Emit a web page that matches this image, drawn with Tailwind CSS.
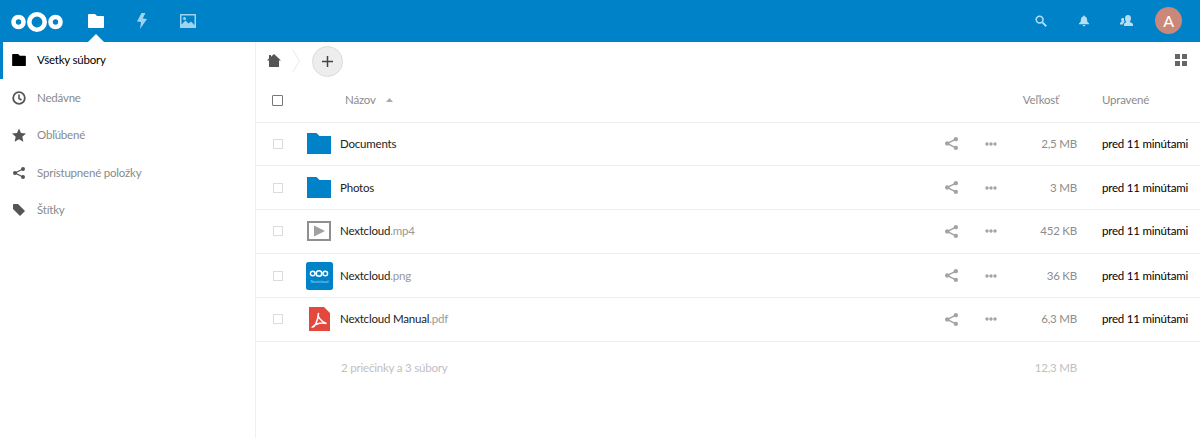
<!DOCTYPE html>
<html><head><meta charset="utf-8"><script src="https://cdn.jsdelivr.net/npm/@tailwindcss/browser@4"></script></head>
<body class="bg-white font-['Lato',sans-serif] text-[11.5px] tracking-[-0.2px] overflow-hidden">
<div class="w-[1200px] h-[438px] flex flex-col overflow-hidden">
<header class="h-[42px] bg-[#0082c9] flex items-center relative shrink-0">
  <svg class="ml-[11px] w-[52px] h-[26px] mt-[2px]" viewBox="0 0 52 26"><g fill="none" stroke="#fff"><circle cx="26" cy="13" r="7.700" stroke-width="4.600"/><circle cx="7.500" cy="13" r="5" stroke-width="4.600"/><circle cx="44.500" cy="13" r="5" stroke-width="4.600"/></g></svg>
  <svg class="ml-[25px] w-[16px] h-[14px] -mt-[1px]" viewBox="0 0 16 14"><path fill="#fff" d="M1 0h6l2 2h6a1 1 0 0 1 1 1v10a1 1 0 0 1-1 1H1a1 1 0 0 1-1-1V1a1 1 0 0 1 1-1z"/></svg>
  <svg class="ml-[33px] w-[10px] h-[16px] -mt-[1px]" viewBox="0 0 10 16"><path fill="#9fd3ee" d="M4.500 0 0 8.500l4 .5L3 16l7-10-4.300-.5L8.500 0z"/></svg>
  <svg class="ml-[33px] w-[16px] h-[14px] -mt-[1px]" viewBox="0 0 16 14"><path fill="#9fd3ee" fill-rule="evenodd" d="M0 0h16v14H0zM1.500 1.500v9l4-4 3 3 2.500-2 3.500 3.500v-9.500zM3 4.500a1.500 1.500 0 1 0 3 0a1.500 1.500 0 1 0-3 0z"/></svg>
  <div class="absolute left-[88px] top-[34px] w-0 h-0 border-x-[8px] border-x-transparent border-b-[8px] border-b-white"></div>
  <div class="ml-auto flex items-center -mt-[1px]">
    <svg class="w-[12px] h-[12px]" viewBox="0 0 13 13"><circle cx="5" cy="5" r="3.700" fill="none" stroke="#b5def3" stroke-width="1.700"/><path d="m8 8 4.200 4.200" stroke="#b5def3" stroke-width="2"/></svg>
    <svg class="ml-[32px] w-[10px] h-[12px]" viewBox="0 0 11 12"><path fill="#b5def3" d="M5.500 0a1 1 0 0 1 1 1C8.500 1.500 9 3.500 9 5.500c0 1.500.8 2.500 2 3v1H0v-1c1.200-.5 2-1.500 2-3C2 3.500 2.500 1.500 4.500 1a1 1 0 0 1 1-1zM4 10.300h3a1.500 1.500 0 0 1-3 0z"/></svg>
    <svg class="ml-[31px] w-[13px] h-[12px]" viewBox="0 0 13 12"><path fill="#b5def3" d="M8 0c2 0 3 1.500 3 3.200S10.300 6 9.800 7c1.200.5 3.200 1 3.200 2.500V11H4V9.500C4 8 5.700 7.500 6.200 7 5.700 6 5 5 5 3.200S6 0 8 0zM3 3c.4 0 .8 0 1 .2C3.800 5 4.300 6 4.700 7 3.500 7.800 3 8.500 3 9.500H0V8.300C0 7.300 1.300 7 1.900 6.500 1.500 5.800 1 5.200 1 4.500 1 3.500 2 3 3 3z"/></svg>
    <div class="ml-[22px] mr-[18px] w-[27px] h-[27px] rounded-full bg-[#c98879] text-white text-[16px] flex items-center justify-center">A</div>
  </div>
</header>
<div class="flex flex-1 min-h-0">
  <nav class="w-[256px] shrink-0 border-r border-[#f0f0f0] text-[#8a8a8a]">
    <div class="h-[37px] pb-[1px] flex items-center border-l-[3px] border-[#0082c9] text-black"><svg class="ml-[9px] w-[14px] h-[12px]" viewBox="0 0 16 14"><path fill="#000" d="M1 0h6l2 2h6a1 1 0 0 1 1 1v10a1 1 0 0 1-1 1H1a1 1 0 0 1-1-1V1a1 1 0 0 1 1-1z"/></svg><span class="ml-[11px]">Všetky súbory</span></div>
    <div class="h-[38px] flex items-center"><svg class="ml-[12px] w-[14px] h-[14px]" viewBox="0 0 14 14"><circle cx="7" cy="7" r="5.800" fill="none" stroke="#555" stroke-width="1.800"/><path d="M7 3.500V7.500l2.500 1.500" fill="none" stroke="#555" stroke-width="1.600"/></svg><span class="ml-[11px]">Nedávne</span></div>
    <div class="h-[37px] pb-[1px] flex items-center"><svg class="ml-[12px] w-[14px] h-[14px]" viewBox="0 0 14 14"><path fill="#555" d="m7 .5 2 4.500 5 .5-3.700 3.300 1.100 5L7 11.200 2.600 13.800l1.100-5L0 5.500 5 5z"/></svg><span class="ml-[11px]">Obľúbené</span></div>
    <div class="h-[38px] flex items-center"><svg class="ml-[13px] w-[12px] h-[12px]" viewBox="0 0 12 12"><g fill="#555"><circle cx="2" cy="6" r="2"/><circle cx="10" cy="2" r="2"/><circle cx="10" cy="10" r="2"/></g><path d="M10 2 2 6l8 4" fill="none" stroke="#555" stroke-width="1.300"/></svg><span class="ml-[12px]">Sprístupnené položky</span></div>
    <div class="h-[37px] pb-[1px] flex items-center"><svg class="ml-[13px] w-[12px] h-[12px]" viewBox="0 0 12 12"><path fill="#555" d="M0 1a1 1 0 0 1 1-1h4l7 7-5 5-7-7z"/></svg><span class="ml-[12px]">Štítky</span></div>
  </nav>
  <main class="flex-1 min-w-0">
    <div class="h-[38px] flex items-center relative">
      <svg class="ml-[11px] w-[14px] h-[13px] -mt-[2px]" viewBox="0 0 14 13"><path fill="#555" d="M7 0l7 6.500h-2V13H2V6.500H0L2 4.600V1h2v1.700z"/></svg>
      <svg class="ml-[11px] w-[8px] h-[24px]" viewBox="0 0 8 24"><path d="M.5.500l7 11.500-7 11.500" fill="none" stroke="#e8e8e8"/></svg>
      <div class="ml-[12px] w-[31px] h-[31px] rounded-full bg-[#ededed] border border-[#dbdbdb] flex items-center justify-center"><svg class="w-[11px] h-[11px]" viewBox="0 0 11 11"><path d="M5.500 0v11M0 5.500h11" stroke="#444" stroke-width="1.500"/></svg></div>
      <svg class="ml-auto mr-[13px] w-[12px] h-[12px] -mt-[2px]" viewBox="0 0 12 12"><path fill="#666" d="M0 0h5v5H0zM7 0h5v5H7zM0 7h5v5H0zM7 7h5v5H7z"/></svg>
    </div>
    <div class="h-[43px] pb-[2px] flex items-center border-b border-[#ededed] text-[#8c8c8c]">
      <div class="ml-[16px] w-[11px] h-[11px] border border-[#767676] rounded-[1px]"></div>
      <span class="ml-[62px] w-[30px]">Názov</span><svg class="ml-[11px] w-[7px] h-[4px]" viewBox="0 0 7 4"><path fill="#aaa" d="M3.500 0 7 4H0z"/></svg>
      <span class="ml-auto mr-[43px]">Veľkosť</span><span class="w-[98px]">Upravené</span>
    </div>
    <div class="h-[43px] pb-[1px] flex items-center border-b border-[#ededed]">
      <div class="ml-[17px] w-[10px] h-[10px] border border-[#dcdcdc]"></div>
      <div class="ml-[24px] w-[24px] flex justify-center"><svg class="w-[24px] h-[21px] shrink-0" viewBox="0 0 24 21"><path fill="#0082c9" d="M0 0h9.500l3 3H24v18H0z"/></svg></div>
      <span class="ml-[9px] text-[#222]">Documents</span>
      <svg class="ml-auto w-[13px] h-[13px]" viewBox="0 0 12 12"><g fill="#a3a3a3"><circle cx="2" cy="6" r="2"/><circle cx="10" cy="2" r="2"/><circle cx="10" cy="10" r="2"/></g><path d="M10 2 2 6l8 4" fill="none" stroke="#a3a3a3" stroke-width="1.300"/></svg>
      <svg class="ml-[27px] w-[12px] h-[4px]" viewBox="0 0 12 4"><g fill="#a3a3a3"><circle cx="2" cy="2" r="1.700"/><circle cx="6" cy="2" r="1.700"/><circle cx="10" cy="2" r="1.700"/></g></svg>
      <span class="w-[80px] text-right text-[#8c8c8c]">2,5 MB</span><span class="ml-[25px] w-[98px] text-black whitespace-nowrap">pred 11 minútami</span>
    </div>
    <div class="h-[44px] flex items-center border-b border-[#ededed]">
      <div class="ml-[17px] w-[10px] h-[10px] border border-[#dcdcdc]"></div>
      <div class="ml-[24px] w-[24px] flex justify-center"><svg class="w-[24px] h-[21px] shrink-0" viewBox="0 0 24 21"><path fill="#0082c9" d="M0 0h9.500l3 3H24v18H0z"/></svg></div>
      <span class="ml-[9px] text-[#222]">Photos</span>
      <svg class="ml-auto w-[13px] h-[13px]" viewBox="0 0 12 12"><g fill="#a3a3a3"><circle cx="2" cy="6" r="2"/><circle cx="10" cy="2" r="2"/><circle cx="10" cy="10" r="2"/></g><path d="M10 2 2 6l8 4" fill="none" stroke="#a3a3a3" stroke-width="1.300"/></svg>
      <svg class="ml-[27px] w-[12px] h-[4px]" viewBox="0 0 12 4"><g fill="#a3a3a3"><circle cx="2" cy="2" r="1.700"/><circle cx="6" cy="2" r="1.700"/><circle cx="10" cy="2" r="1.700"/></g></svg>
      <span class="w-[80px] text-right text-[#8c8c8c]">3 MB</span><span class="ml-[25px] w-[98px] text-black whitespace-nowrap">pred 11 minútami</span>
    </div>
    <div class="h-[44px] pb-[1px] flex items-center border-b border-[#ededed]">
      <div class="ml-[17px] w-[10px] h-[10px] border border-[#dcdcdc]"></div>
      <div class="ml-[24px] w-[24px] flex justify-center"><svg class="w-[24px] h-[20px] shrink-0" viewBox="0 0 24 20"><rect x="1" y="1" width="22" height="18" fill="#fff" stroke="#8f8f8f" stroke-width="2"/><path fill="#a0a0a0" d="M7 4.500 18 10 7 15.500z"/></svg></div>
      <span class="ml-[9px] text-[#222]">Nextcloud<span class="text-[#999]">.mp4</span></span>
      <svg class="ml-auto w-[13px] h-[13px]" viewBox="0 0 12 12"><g fill="#a3a3a3"><circle cx="2" cy="6" r="2"/><circle cx="10" cy="2" r="2"/><circle cx="10" cy="10" r="2"/></g><path d="M10 2 2 6l8 4" fill="none" stroke="#a3a3a3" stroke-width="1.300"/></svg>
      <svg class="ml-[27px] w-[12px] h-[4px]" viewBox="0 0 12 4"><g fill="#a3a3a3"><circle cx="2" cy="2" r="1.700"/><circle cx="6" cy="2" r="1.700"/><circle cx="10" cy="2" r="1.700"/></g></svg>
      <span class="w-[80px] text-right text-[#8c8c8c]">452 KB</span><span class="ml-[25px] w-[98px] text-black whitespace-nowrap">pred 11 minútami</span>
    </div>
    <div class="h-[44px] flex items-center border-b border-[#ededed]">
      <div class="ml-[17px] w-[10px] h-[10px] border border-[#dcdcdc]"></div>
      <div class="ml-[24px] w-[24px] flex justify-center"><svg class="w-[27px] h-[28px] shrink-0" viewBox="0 0 27 28"><rect width="27" height="28" rx="2.500" fill="#0082c9"/><g fill="none" stroke="#fff"><circle cx="13" cy="11.500" r="2.800" stroke-width="1.600"/><circle cx="6.700" cy="11.500" r="2.300" stroke-width="1.400"/><circle cx="19.300" cy="11.500" r="2.300" stroke-width="1.400"/></g><text x="13.500" y="20.500" text-anchor="middle" font-size="4" letter-spacing="0" fill="#a8d8f0">Nextcloud</text></svg></div>
      <span class="ml-[9px] text-[#222]">Nextcloud<span class="text-[#999]">.png</span></span>
      <svg class="ml-auto w-[13px] h-[13px]" viewBox="0 0 12 12"><g fill="#a3a3a3"><circle cx="2" cy="6" r="2"/><circle cx="10" cy="2" r="2"/><circle cx="10" cy="10" r="2"/></g><path d="M10 2 2 6l8 4" fill="none" stroke="#a3a3a3" stroke-width="1.300"/></svg>
      <svg class="ml-[27px] w-[12px] h-[4px]" viewBox="0 0 12 4"><g fill="#a3a3a3"><circle cx="2" cy="2" r="1.700"/><circle cx="6" cy="2" r="1.700"/><circle cx="10" cy="2" r="1.700"/></g></svg>
      <span class="w-[80px] text-right text-[#8c8c8c]">36 KB</span><span class="ml-[25px] w-[98px] text-black whitespace-nowrap">pred 11 minútami</span>
    </div>
    <div class="h-[44px] pb-[1px] flex items-center border-b border-[#ededed]">
      <div class="ml-[17px] w-[10px] h-[10px] border border-[#dcdcdc]"></div>
      <div class="ml-[24px] w-[24px] flex justify-center"><svg class="w-[21px] h-[24px] shrink-0" viewBox="0 0 21 24"><path fill="#e2483d" d="M0 0h15l6 6v18H0z"/><path d="M9.500 6c-1 3 1 8 8 10.500-4-.8-10-.3-14 3.500 2 .5 5.500-6 6-14z" fill="none" stroke="#fff" stroke-width="1.500"/></svg></div>
      <span class="ml-[9px] text-[#222]">Nextcloud Manual<span class="text-[#999]">.pdf</span></span>
      <svg class="ml-auto w-[13px] h-[13px]" viewBox="0 0 12 12"><g fill="#a3a3a3"><circle cx="2" cy="6" r="2"/><circle cx="10" cy="2" r="2"/><circle cx="10" cy="10" r="2"/></g><path d="M10 2 2 6l8 4" fill="none" stroke="#a3a3a3" stroke-width="1.300"/></svg>
      <svg class="ml-[27px] w-[12px] h-[4px]" viewBox="0 0 12 4"><g fill="#a3a3a3"><circle cx="2" cy="2" r="1.700"/><circle cx="6" cy="2" r="1.700"/><circle cx="10" cy="2" r="1.700"/></g></svg>
      <span class="w-[80px] text-right text-[#8c8c8c]">6,3 MB</span><span class="ml-[25px] w-[98px] text-black whitespace-nowrap">pred 11 minútami</span>
    </div>
    <div class="h-[52px] flex items-center text-[#c0c0c0]">
      <span class="ml-[85px]">2 priečinky a 3 súbory</span>
      <span class="ml-auto mr-[123px]">12,3 MB</span>
    </div>
  </main>
</div>
</div>
</body></html>
